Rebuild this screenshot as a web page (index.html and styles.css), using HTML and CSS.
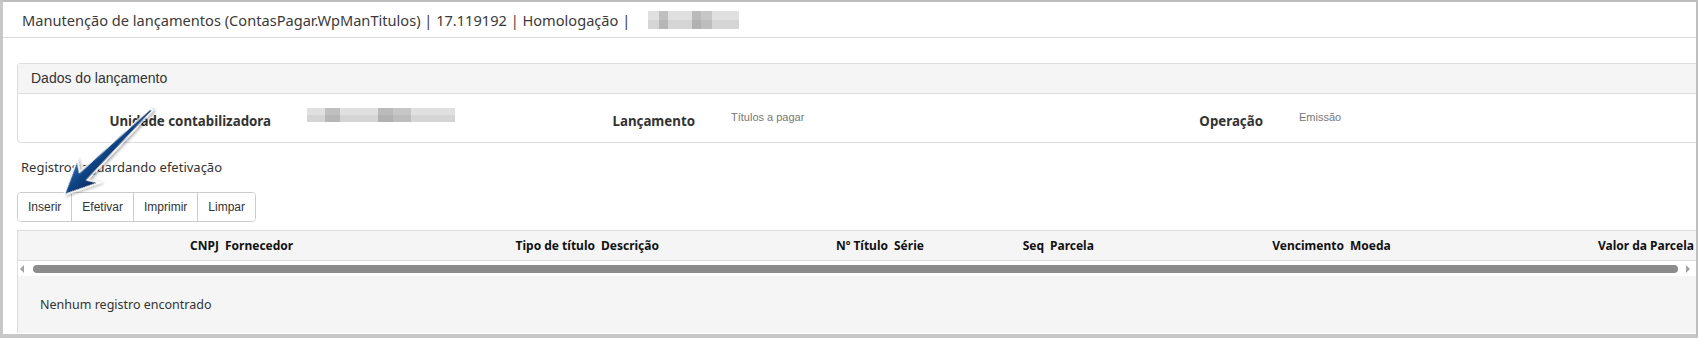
FILE: index.html
```html
<!DOCTYPE html>
<html lang="pt-BR">
<head>
    <meta charset="UTF-8">
    <title>Manutenção de lançamentos</title>
    <link rel="stylesheet" href="styles.css">
</head>
<body>
    <div class="frame">
        <div class="topbar">
            <span class="title">Manutenção de lançamentos (ContasPagar.WpManTitulos) | 17.119192 | Homologação |</span>
            <span class="blur blur-title"></span>
        </div>

        <div class="content">
            <div class="panel">
                <div class="panel-head">Dados do lançamento</div>
                <div class="panel-body">
                    <span class="label">Unidade contabilizadora</span>
                    <span class="value"><span class="blur blur-value"></span></span>
                    <span class="label">Lançamento</span>
                    <span class="value">Títulos a pagar</span>
                    <span class="label">Operação</span>
                    <span class="value">Emissão</span>
                </div>
            </div>

            <div class="section-title">Registros aguardando efetivação</div>

            <div class="btn-group">
                <button>Inserir</button>
                <button>Efetivar</button>
                <button>Imprimir</button>
                <button>Limpar</button>
            </div>

            <div class="grid">
                <div class="grid-head">
                    <span class="col c-cnpj">CNPJ</span>
                    <span class="col c-forn">Fornecedor</span>
                    <span class="col c-tipo">Tipo de título</span>
                    <span class="col c-desc">Descrição</span>
                    <span class="col c-num">Nº Título</span>
                    <span class="col c-serie">Série</span>
                    <span class="col c-seq">Seq</span>
                    <span class="col c-parc">Parcela</span>
                    <span class="col c-venc">Vencimento</span>
                    <span class="col c-moeda">Moeda</span>
                    <span class="col c-valor">Valor da Parcela</span>
                </div>
                <div class="grid-scroll">
                    <span class="scroll-arrow left"></span>
                    <span class="scroll-thumb"></span>
                    <span class="scroll-arrow right"></span>
                </div>
                <div class="grid-body">Nenhum registro encontrado</div>
            </div>
        </div>

        <!-- seta de destaque sobre o botão Inserir -->
        <svg class="pointer" viewBox="0 0 200 220" width="200" height="220">
            <defs>
                <linearGradient id="arrowFill" x1="0" y1="0" x2="0" y2="1">
                    <stop offset="0" stop-color="#2e6bb0"/>
                    <stop offset="0.45" stop-color="#0f4585"/>
                    <stop offset="1" stop-color="#05295a"/>
                </linearGradient>
                <filter id="arrowShadow" x="-20%" y="-20%" width="140%" height="140%">
                    <feDropShadow dx="1" dy="2" stdDeviation="1.5" flood-color="#000" flood-opacity="0.35"/>
                </filter>
            </defs>
            <g transform="translate(64 195) rotate(-44.3)" filter="url(#arrowShadow)">
                <polygon points="0,0 34,-16 27,-5.5 122,-1.4 122,1.4 27,5.5 34,16"
                         fill="url(#arrowFill)" stroke="#fff" stroke-width="1.4" stroke-linejoin="miter"/>
            </g>
        </svg>
    </div>
</body>
</html>
```

FILE: styles.css
```css
body {
    margin: 0;
    background-color: #fff;
}
.frame {
    position: relative;
    width: 1698px;
    height: 338px;
    box-sizing: border-box;
    overflow: hidden;
    border-top: 2px solid #bdbdbd;
    border-left: 3px solid #c8c8c8;
    border-right: 2px solid #bdbdbd;
    border-bottom: 4px solid #c8c8c8;
    font-family: "Noto Sans", "DejaVu Sans", sans-serif;
    color: #333;
}
.topbar {
    display: flex;
    align-items: center;
    height: 35px;
    padding-left: 19px;
    border-bottom: 1px solid #ddd;
}
.title {
    font-size: 14.6px;
    color: #3a3a3a;
    white-space: nowrap;
}
.blur {
    display: inline-block;
    background-color: #ececec;
    background-image:
        linear-gradient(90deg, transparent 0 12%, #dadada 12% 22%, transparent 22% 48%, #d4d4d4 48% 58%, #e2e2e2 58% 70%, transparent 70% 100%),
        linear-gradient(180deg, #f2f2f2 0 50%, #e6e6e6 50% 100%);
    background-blend-mode: multiply;
}
.blur-title {
    width: 91px;
    height: 18px;
    margin-left: 18px;
}
.blur-value {
    display: block;
    width: 148px;
    height: 14px;
    margin-top: -3px;
}
.content {
    padding: 25px 0 0 14px;
}
.panel {
    border: 1px solid #ddd;
    border-right: none;
    border-radius: 4px 0 0 4px;
}
.panel-head {
    height: 29px;
    line-height: 29px;
    padding-left: 13px;
    background-color: #f5f5f5;
    border-bottom: 1px solid #ddd;
    font-family: "Liberation Sans", Arial, sans-serif;
    font-size: 14px;
    color: #333;
}
.panel-body {
    display: grid;
    grid-template-columns: 253px 289px 135px 405px 163px 1fr;
    padding: 17px 0 11px 0;
}
.label {
    text-align: right;
    font-weight: bold;
    font-size: 13.3px;
    line-height: 20px;
    color: #333;
    white-space: nowrap;
}
.value {
    font-family: "Liberation Sans", Arial, sans-serif;
    font-size: 11px;
    line-height: 13px;
    color: #777;
    padding-left: 36px;
}
.section-title {
    margin-top: 14px;
    font-size: 13px;
    line-height: 20px;
    padding-left: 4px;
    color: #333;
}
.btn-group {
    display: inline-flex;
    margin-top: 15px;
    border: 1px solid #ccc;
    border-radius: 4px;
    overflow: hidden;
}
.btn-group button {
    height: 28px;
    padding: 0 10px;
    border: none;
    border-left: 1px solid #ccc;
    background-color: #fff;
    font-family: "Liberation Sans", Arial, sans-serif;
    font-size: 12px;
    color: #333;
}
.btn-group button:first-child {
    border-left: none;
}
.grid {
    margin-top: 8px;
    border-left: 1px solid #ddd;
}
.grid-head {
    display: grid;
    grid-template-columns: 204px 178px 198px 102px 191px 69px 87px 103px 197px 103px 244px;
    height: 29px;
    align-items: center;
    background-color: #f5f5f5;
    border-top: 1px solid #ddd;
    border-bottom: 1px solid #ddd;
    font-size: 12px;
    font-weight: bold;
    color: #111;
    white-space: nowrap;
}
.col {
    padding: 0 3px;
}
.c-cnpj, .c-tipo, .c-num, .c-seq, .c-venc, .c-valor {
    text-align: right;
}
.c-valor {
    padding-right: 0;
}
.grid-scroll {
    display: flex;
    align-items: center;
    height: 15px;
    background-color: #fff;
}
.scroll-arrow {
    width: 0;
    height: 0;
    border-top: 4px solid transparent;
    border-bottom: 4px solid transparent;
}
.scroll-arrow.left {
    margin-left: 2px;
    border-right: 4px solid #a3a3a3;
}
.scroll-arrow.right {
    margin-left: 8px;
    border-left: 4px solid #a3a3a3;
}
.scroll-thumb {
    width: 1645px;
    height: 8px;
    margin-left: 9px;
    border-radius: 4px;
    background-color: #8c8c8c;
}
.grid-body {
    height: 57px;
    line-height: 57px;
    padding-left: 22px;
    background-color: #f5f5f5;
    font-size: 12.5px;
    color: #333;
}
.pointer {
    position: absolute;
    left: -3px;
    top: -2px;
    pointer-events: none;
}
```
